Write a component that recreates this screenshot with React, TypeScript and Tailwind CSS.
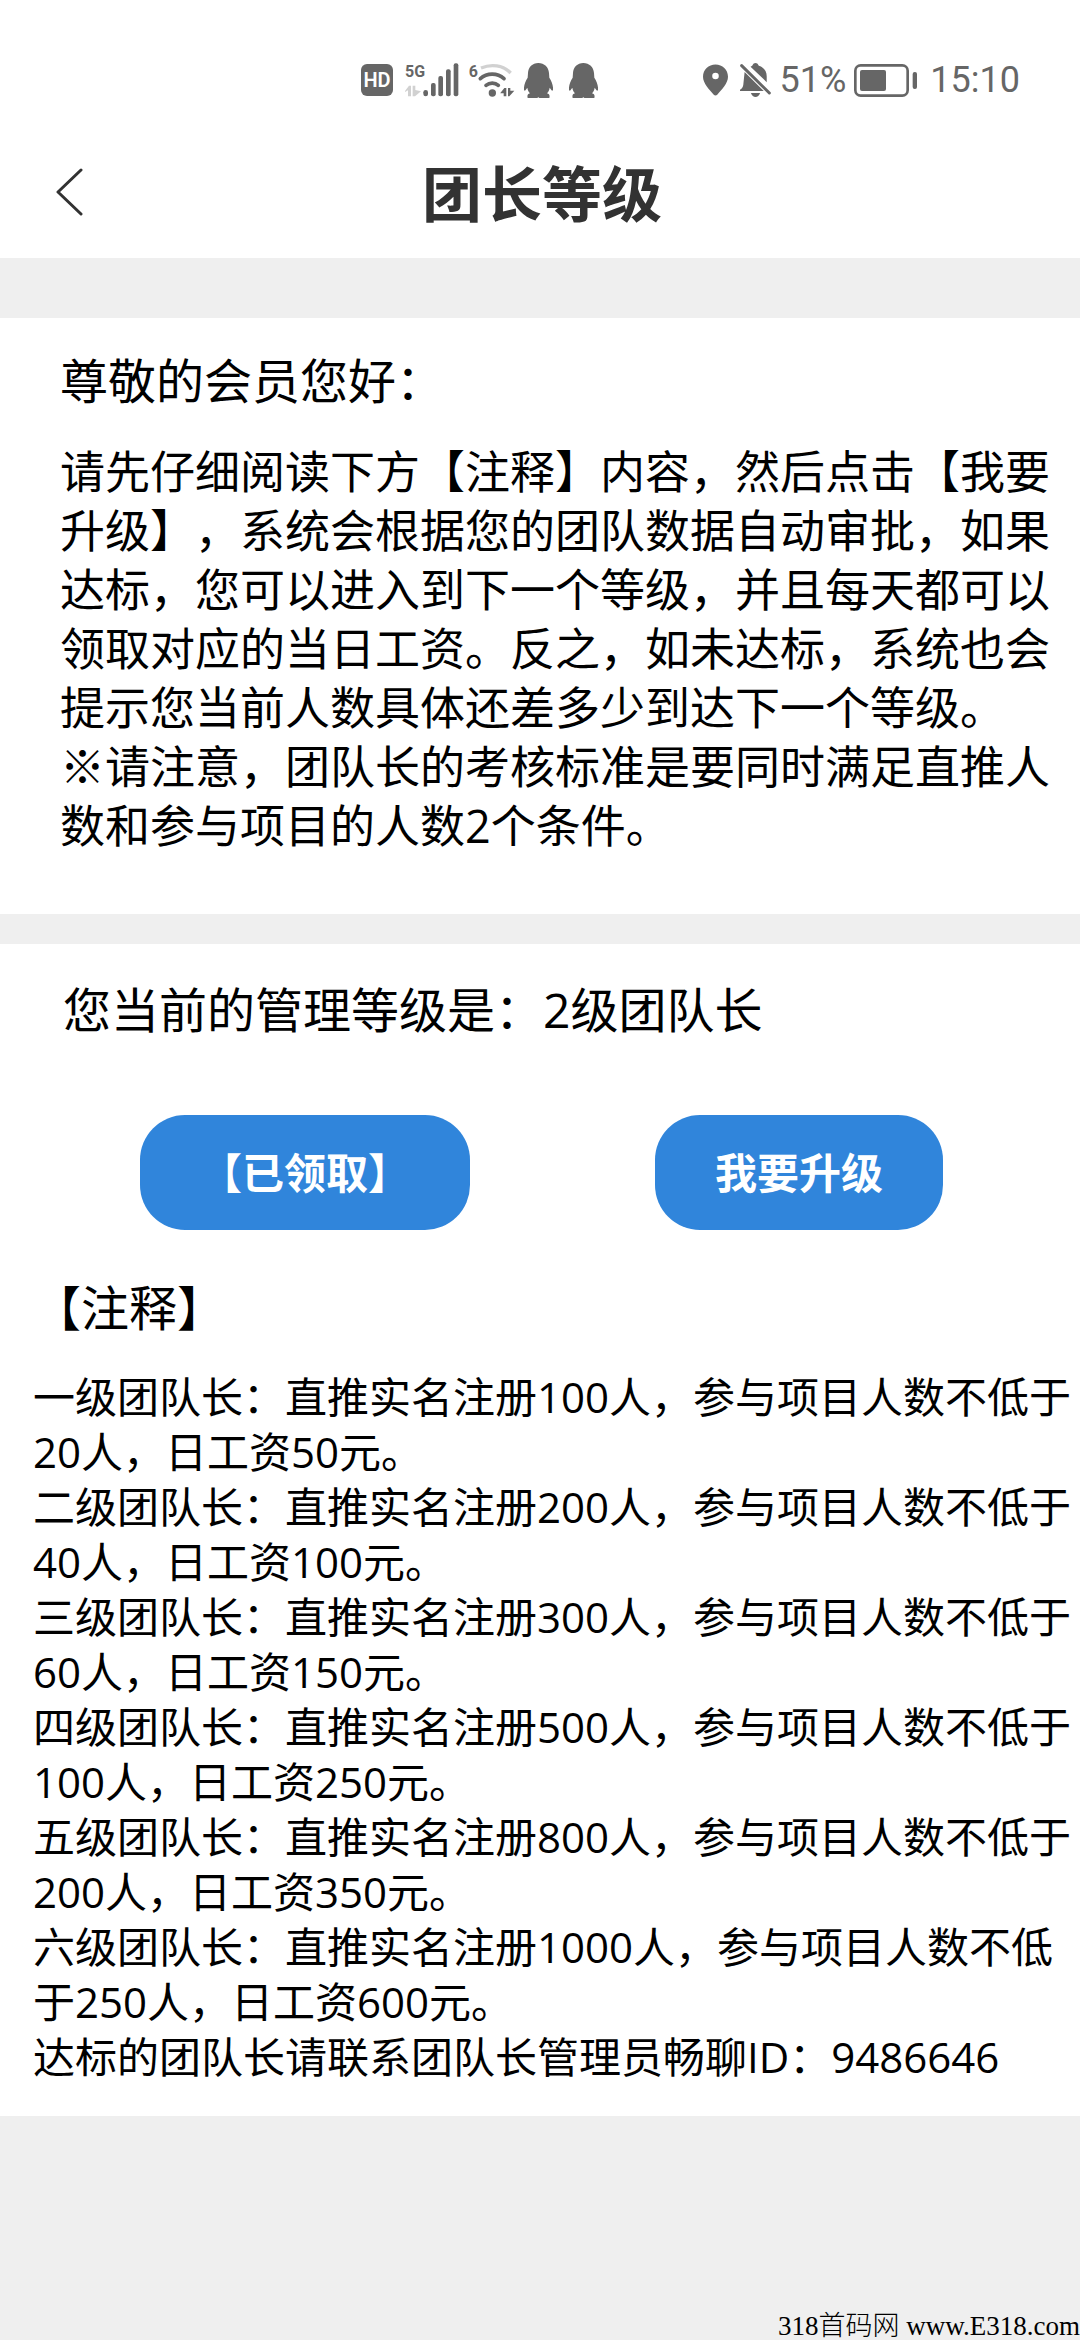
const levels = [
  { name: "一级团队长", referrals: 100, members: 20, wage: 50 },
  { name: "二级团队长", referrals: 200, members: 40, wage: 100 },
  { name: "三级团队长", referrals: 300, members: 60, wage: 150 },
  { name: "四级团队长", referrals: 500, members: 100, wage: 250 },
  { name: "五级团队长", referrals: 800, members: 200, wage: 350 },
  { name: "六级团队长", referrals: 1000, members: 250, wage: 600 },
];

function SignalIcon() {
  return (
    <svg className="h-9 w-[54px] shrink-0 overflow-visible" viewBox="0 0 162 108" fill="currentColor" aria-hidden="true">
      <text x="0" y="46" fontSize="48" fontWeight="700" fontFamily="Roboto, sans-serif">5G</text>
      <path d="M0 87 12 71H18V103H9V85L0 90ZM23 71H31V84L48 88 30 103H23Z" opacity="0.3" />
      <rect x="55" y="84" width="14" height="19" rx="7" />
      <rect x="78" y="63" width="14" height="40" rx="6" />
      <rect x="100" y="42" width="14" height="61" rx="6" />
      <rect x="123" y="22" width="14" height="81" rx="6" />
      <rect x="146" y="4" width="14" height="99" rx="6" />
    </svg>
  );
}

function WifiIcon() {
  return (
    <svg className="h-9 w-[47px] shrink-0 overflow-visible" viewBox="0 0 141 108" fill="none" stroke="currentColor" strokeLinecap="round" aria-hidden="true">
      <text x="2" y="46" fontSize="48" fontWeight="700" fill="currentColor" stroke="none" fontFamily="Roboto, sans-serif">6</text>
      <path d="M39 18C70 5 105 9 128 33" strokeWidth="10" strokeLinecap="butt" opacity="0.3" />
      <path d="M37 50C57 32 88 32 108 50" strokeWidth="11" />
      <path d="M54 70C65 61 81 61 91 70" strokeWidth="11" />
      <circle cx="73" cy="93" r="11" fill="currentColor" stroke="none" />
      <path d="M97 93 109 78H115V103H107V94H97ZM120 78H127V86H139L124 103H120Z" fill="currentColor" stroke="none" />
    </svg>
  );
}

function PenguinIcon() {
  return (
    <svg className="h-[35px] w-[29px] shrink-0" viewBox="0 0 87 105" fill="currentColor" aria-hidden="true">
      <path d="M43 0C61 0 74 13 75 30L76 44C83 54 88 68 87 80C86 84 84 84 82 81L77 74C76 82 73 87 69 91C76 93 78 97 76 105H46Q43 101 40 105H11C9 97 11 93 18 91C14 87 11 82 10 74L5 81C3 84 1 84 0 80C-1 68 4 54 11 44L12 30C13 13 25 0 43 0Z" />
    </svg>
  );
}

function LocationIcon() {
  return (
    <svg className="h-8 w-[25px] shrink-0" viewBox="0 0 76 96" fill="currentColor" fillRule="evenodd" aria-hidden="true">
      <path d="M38 1C59 1 76 17 76 38C76 58 57 77 44 92Q38 98 32 92C19 77 0 58 0 38C0 17 17 1 38 1ZM38 26A10 10 0 1 0 38 46A10 10 0 1 0 38 26Z" />
    </svg>
  );
}

function BellOffIcon() {
  return (
    <svg className="h-[34px] w-[31px] shrink-0" viewBox="0 0 94 103" fill="currentColor" aria-hidden="true">
      <path d="M14 27 72 85H0V81C7 77 9 73 10 66Z" />
      <path d="M32 11 37 8C40 2 43 0 47 0S54 2 57 8C73 13 81 25 81 40V58Z" />
      <path d="M33 91H61C58 99 53 103 47 103S36 99 33 91Z" />
      <path d="M5 8 89 91" stroke="currentColor" strokeWidth="9" strokeLinecap="round" />
    </svg>
  );
}

function BatteryIcon() {
  return (
    <svg className="h-[33px] w-[63px] shrink-0" viewBox="0 0 189 99" fill="currentColor" aria-hidden="true">
      <rect x="4" y="4" width="157" height="91" rx="16" fill="none" stroke="currentColor" strokeWidth="8" />
      <rect x="18" y="18" width="78" height="63" rx="6" />
      <rect x="176" y="24" width="13" height="51" rx="6" />
    </svg>
  );
}

function StatusBar() {
  return (
    <div className="flex justify-between pt-[56px] pr-[60px] pb-[22px] pl-[361px] font-[Roboto,sans-serif] text-[36px] leading-[48px] text-[#666]">
      <div className="flex items-center">
        <span className="mr-3 flex size-8 items-center justify-center rounded-md bg-[#666] text-[20px] font-semibold text-white">HD</span>
        <SignalIcon />
        <span className="mr-[9px] ml-[9px] flex">
          <WifiIcon />
        </span>
        <span className="flex gap-4">
          <PenguinIcon />
          <PenguinIcon />
        </span>
      </div>
      <div className="flex items-center">
        <LocationIcon />
        <span className="ml-3 flex">
          <BellOffIcon />
        </span>
        <span className="mr-2 ml-[9px]">51%</span>
        <BatteryIcon />
        <span className="ml-[13px]">15:10</span>
      </div>
    </div>
  );
}

function Header() {
  return (
    <header className="grid h-[132px] grid-cols-[1fr_auto_1fr] items-center">
      <button type="button" aria-label="返回" className="ml-[54px] w-[30px]">
        <svg className="h-12 w-[30px]" viewBox="0 0 30 48" fill="none" stroke="#323232" strokeWidth="3" strokeLinecap="round" strokeLinejoin="round">
          <path d="M27 2 4 24 27 46" />
        </svg>
      </button>
      <h1 className="pt-1 pl-1 text-[60px] leading-[72px] font-bold text-[#323232]">团长等级</h1>
    </header>
  );
}

function Notice() {
  return (
    <section className="bg-white pt-[33px] pr-[30px] pb-[59px] pl-[60px]">
      <h2 className="mb-[31px] text-5xl leading-[60px]">尊敬的会员您好：</h2>
      <p className="text-[45px] leading-[59px]">
        请先仔细阅读下方【注释】内容，然后点击【我要升级】，系统会根据您的团队数据自动审批，如果达标，您可以进入到下一个等级，并且每天都可以领取对应的当日工资。反之，如未达标，系统也会提示您当前人数具体还差多少到达下一个等级。
        <br />
        ※请注意，团队长的考核标准是要同时满足直推人数和参与项目的人数2个条件。
      </p>
    </section>
  );
}

function LevelPanel() {
  return (
    <section className="bg-white pt-9 pb-8">
      <p className="pl-[63px] text-5xl leading-[60px]">您当前的管理等级是：2级团队长</p>
      <div className="mt-[75px] flex justify-between pr-[137px] pl-[140px] text-[42px] leading-[55px] font-bold text-white">
        <button type="button" className="rounded-[45px] bg-[#3085db] px-[60px] py-[30px]">【已领取】</button>
        <button type="button" className="rounded-[45px] bg-[#3085db] px-[60px] py-[30px]">我要升级</button>
      </div>
      <h2 className="mt-12 pl-[33px] text-5xl leading-[60px]">【注释】</h2>
      <div className="mt-[31px] pl-[33px] text-[42px] leading-[55px]">
        <ul>
          {levels.map((level) => (
            <li key={level.name}>
              {`${level.name}：直推实名注册${level.referrals}人，参与项目人数不低于${level.members}人，日工资${level.wage}元。`}
            </li>
          ))}
        </ul>
        <p>达标的团队长请联系团队长管理员畅聊ID：9486646</p>
      </div>
    </section>
  );
}

export default function App() {
  return (
    <div lang="zh-CN" className="flex min-h-screen flex-col bg-[#efefef] font-['Open_Sans','Noto_Sans_CJK_SC',sans-serif] text-black [text-spacing-trim:space-all]">
      <div className="bg-white">
        <StatusBar />
        <Header />
      </div>
      <main className="mt-[60px] flex flex-col gap-[30px]">
        <Notice />
        <LevelPanel />
      </main>
      <footer className="mt-auto text-right font-['Liberation_Serif','Noto_Sans_CJK_SC',serif] text-[27px] leading-[27px] font-light">
        318首码网 www.E318.com
      </footer>
    </div>
  );
}
